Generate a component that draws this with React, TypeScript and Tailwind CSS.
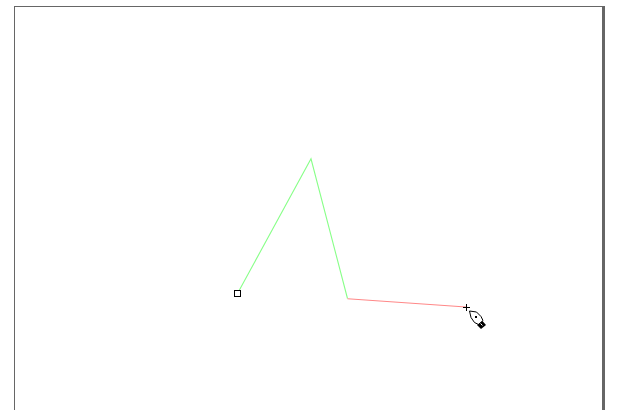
import React from 'react';

// Pen tool drawing on a blank artboard
export default function App() {
  return (
    <div className="w-[619px] h-[410px] bg-white overflow-hidden pl-[14px] pt-[6px]">
      <div className="relative w-[591px] h-[420px] bg-white border-l border-t border-r-[3px] border-[#666666]">
        <svg className="absolute left-[-15px] top-[-7px]" width="619" height="410" viewBox="0 0 619 410">
          <polyline points="237.5,293.5 311,158.800 347.5,298.5" fill="none" stroke="#88ff88" strokeWidth="1.1" />
          <line x1="347.5" y1="298.7" x2="466" y2="307" stroke="#ff8888" strokeWidth="1.1" />
          <rect x="234.5" y="290.5" width="6" height="6" fill="#ffffff" stroke="#000000" strokeWidth="1" />
          {/* crosshair */}
          <path d="M466.5 304v7M463 307.500h7" stroke="#000000" strokeWidth="1" fill="none" />
          {/* pen cursor */}
          <path d="M469.500 311l7 1 4.500 4.500 2 4-4.500 4-4-2-3.500-5z" fill="#ffffff" stroke="#000000" strokeWidth="1" />
          <rect x="475" y="316" width="2" height="2" fill="#000000" />
          <path d="M482.500 321l3.500 4-5 4-4-4z" fill="#000000" />
          <path d="M480.500 323.500l2 2" stroke="#ffffff" strokeWidth="1" fill="none" />
        </svg>
      </div>
    </div>
  );
}
